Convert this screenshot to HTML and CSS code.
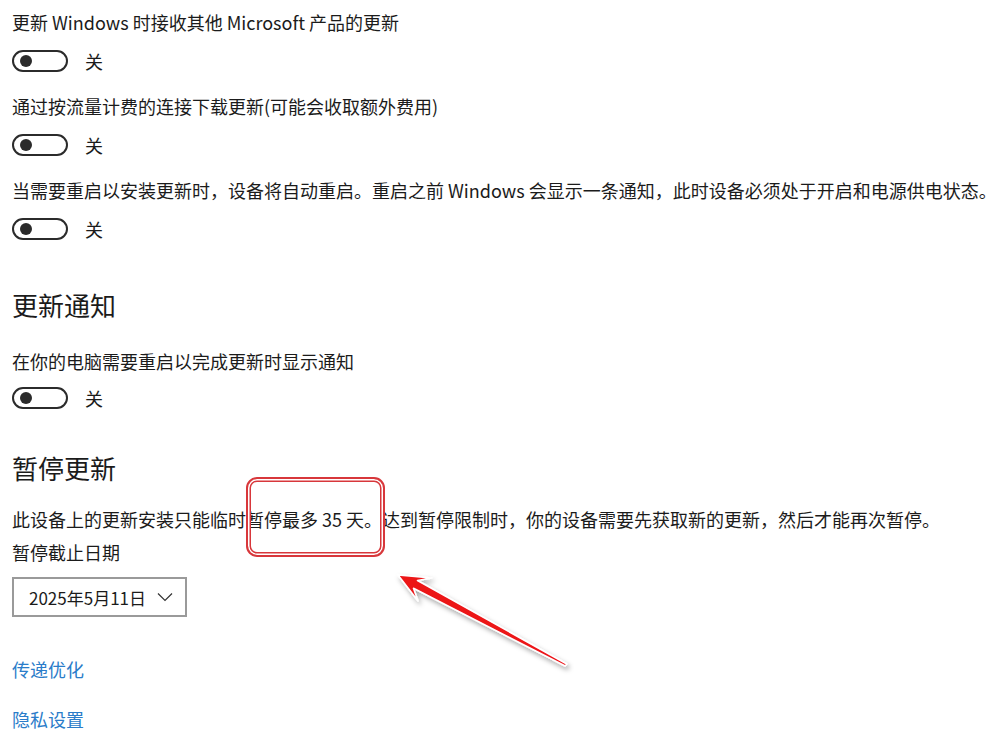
FILE: index.html
```html
<!DOCTYPE html>
<html lang="zh-CN">
<head>
<meta charset="utf-8">
<title>Windows 更新设置</title>
<link rel="stylesheet" href="styles.css">
</head>
<body>
<main class="page">
  <div class="setting">
    <div class="label">更新 Windows 时接收其他 Microsoft 产品的更新</div>
    <div class="toggle-row"><span class="toggle"><span class="knob"></span></span><span class="state">关</span></div>
  </div>
  <div class="setting">
    <div class="label">通过按流量计费的连接下载更新(可能会收取额外费用)</div>
    <div class="toggle-row"><span class="toggle"><span class="knob"></span></span><span class="state">关</span></div>
  </div>
  <div class="setting">
    <div class="label">当需要重启以安装更新时，设备将自动重启。重启之前 Windows 会显示一条通知，此时设备必须处于开启和电源供电状态。</div>
    <div class="toggle-row"><span class="toggle"><span class="knob"></span></span><span class="state">关</span></div>
  </div>

  <h2 class="heading h-notify">更新通知</h2>
  <div class="setting notify">
    <div class="label">在你的电脑需要重启以完成更新时显示通知</div>
    <div class="toggle-row tight"><span class="toggle"><span class="knob"></span></span><span class="state">关</span></div>
  </div>

  <h2 class="heading h-pause">暂停更新</h2>
  <p class="para">此设备上的更新安装只能临时暂停最多 35 天。达到暂停限制时，你的设备需要先获取新的更新，然后才能再次暂停。</p>
  <div class="label small-gap">暂停截止日期</div>
  <div class="dropdown">
    <span>2025年5月11日</span>
    <svg class="chev" width="16" height="10" viewBox="0 0 16 10"><path d="M1 1.5 L8 8.5 L15 1.5" fill="none" stroke="#333" stroke-width="1.2"/></svg>
  </div>

  <a class="link first" href="#">传递优化</a>
  <a class="link" href="#">隐私设置</a>
</main>

<div class="highlight"></div>
<svg class="arrow" width="1000" height="750" viewBox="0 0 1000 750">
  <defs>
    <filter id="sh" x="-20%" y="-20%" width="140%" height="140%">
      <feDropShadow dx="2" dy="3" stdDeviation="2.5" flood-color="#000" flood-opacity="0.35"/>
    </filter>
  </defs>
  <polygon points="398,575 431.5,578.0 417.5,580.5 566.8,664.0 565.2,666.0 413.5,588.3 418.0,601.0" fill="#ec1319" stroke="#fff" stroke-width="1.6" stroke-linejoin="round" filter="url(#sh)"/>
</svg>
</body>
</html>
```

FILE: styles.css
```css
html, body {
  margin: 0;
  padding: 0;
  background: #ffffff;
}
body {
  width: 1000px;
  height: 750px;
  overflow: hidden;
  position: relative;
  font-family: "Noto Sans CJK SC", "Noto Sans", sans-serif;
  color: #1b1b1b;
}
.page {
  padding: 9px 0 0 12px;
  display: flex;
  flex-direction: column;
  align-items: flex-start;
}
.setting {
  display: flex;
  flex-direction: column;
  margin-bottom: 21px;
}
.label {
  font-size: 18px;
  line-height: 26px;
  white-space: nowrap;
}
.toggle-row {
  display: flex;
  align-items: center;
  margin-top: 15px;
  height: 22px;
}
.toggle-row.tight {
  margin-top: 13px;
}
.toggle {
  box-sizing: border-box;
  width: 56px;
  height: 22px;
  border: 2px solid #2b2b2b;
  border-radius: 11px;
  display: flex;
  align-items: center;
  padding-left: 6px;
}
.knob {
  width: 12px;
  height: 12px;
  border-radius: 50%;
  background: #2b2b2b;
}
.state {
  margin-left: 17px;
  font-size: 18px;
  line-height: 22px;
}
.heading {
  margin: 0;
  font-weight: 400;
  font-size: 26px;
  line-height: 36px;
  color: #1b1b1b;
}
.h-notify {
  margin-top: 26px;
  margin-bottom: 25px;
}
.setting.notify {
  margin-bottom: 0;
}
.h-pause {
  margin-top: 41px;
}
.para {
  margin: 20px 0 0;
  font-size: 18px;
  line-height: 26px;
  white-space: nowrap;
}
.small-gap {
  margin-top: 7px;
}
.dropdown {
  box-sizing: border-box;
  margin-top: 12px;
  width: 175px;
  height: 40px;
  border: 2px solid #9a9a9a;
  display: flex;
  align-items: center;
  justify-content: space-between;
  padding: 0 12px 0 15px;
  font-size: 17px;
}
.chev {
  display: block;
}
.link {
  font-size: 18px;
  line-height: 26px;
  color: #2a7cc9;
  text-decoration: none;
  margin-top: 24px;
}
.link.first {
  margin-top: 39px;
}
.highlight {
  position: absolute;
  left: 246px;
  top: 477px;
  width: 139px;
  height: 80px;
  box-sizing: border-box;
  border: 2px solid #d8373b;
  border-radius: 11px;
  box-shadow: inset 0 0 0 1.5px #ffffff, inset 0 0 0 3px #d8373b;
}
.arrow {
  position: absolute;
  left: 0;
  top: 0;
  pointer-events: none;
}
```
